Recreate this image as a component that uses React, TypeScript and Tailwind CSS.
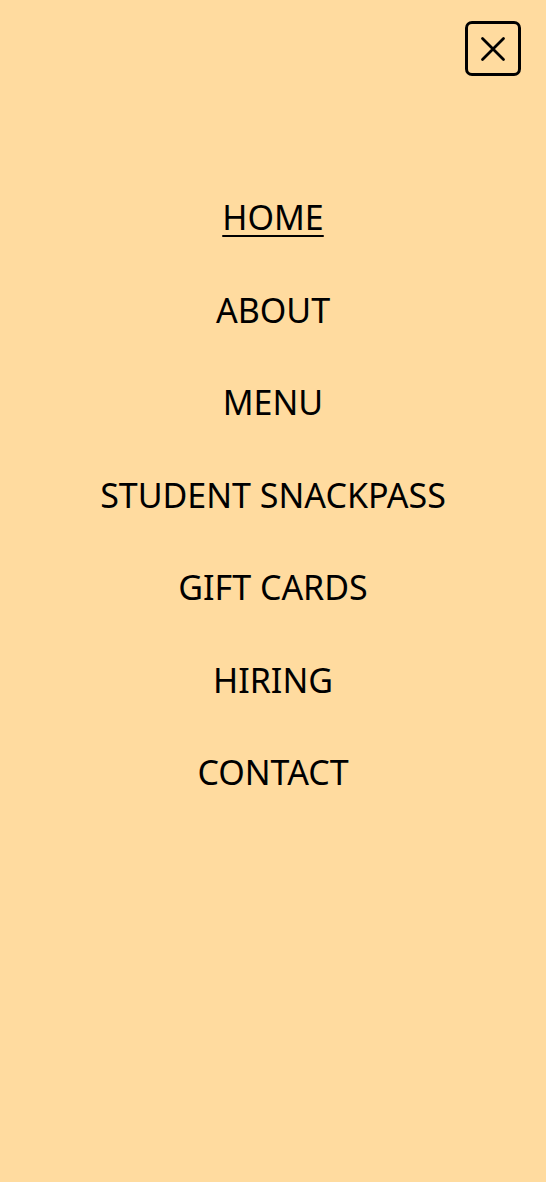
const links = ['HOME', 'ABOUT', 'MENU', 'STUDENT SNACKPASS', 'GIFT CARDS', 'HIRING', 'CONTACT'];

export default function App() {
  return (
    <div className="min-h-screen bg-[#ffdb9f] font-['Noto_Sans',sans-serif] text-black">
      <div className="flex justify-end pt-[21px] pr-[25px]">
        <button className="flex h-[55px] w-[56px] items-center justify-center rounded-[7px] border-[3px] border-black">
          <svg width="26" height="26" viewBox="0 0 26 26" fill="none" stroke="currentColor" strokeWidth="2.8" strokeLinecap="round">
            <path d="M2.5 2.5L23.5 23.5M23.5 2.5L2.5 23.5" />
          </svg>
        </button>
      </div>
      <nav className="mt-[119px] flex flex-col items-center gap-[47.5px]">
        {links.map((link, i) => (
          <a
            key={link}
            href="#"
            className={`text-[34px] leading-[45px] ${i === 0 ? 'underline underline-offset-[5px] decoration-2' : ''}`}
          >
            {link}
          </a>
        ))}
      </nav>
    </div>
  );
}
